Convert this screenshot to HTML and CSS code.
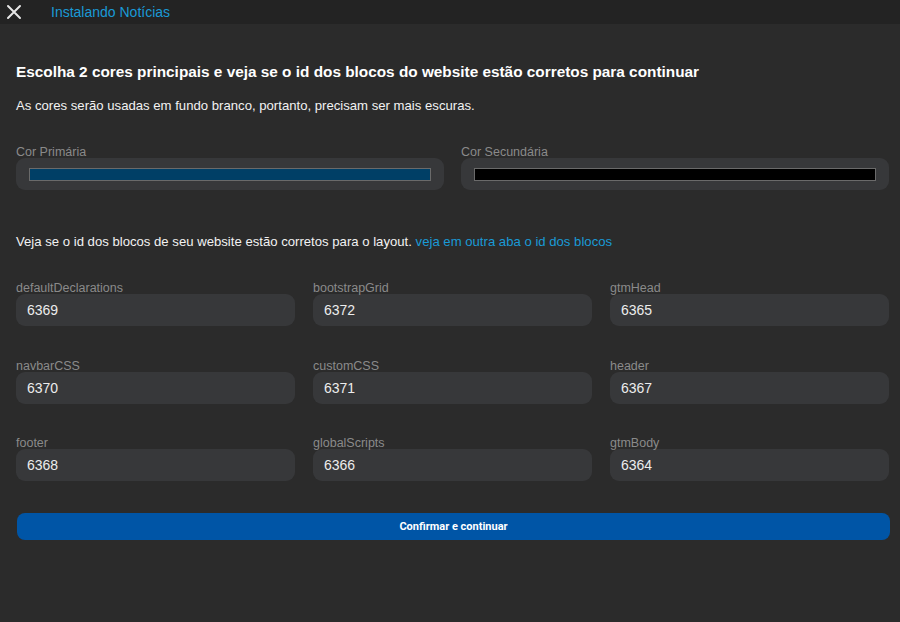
FILE: index.html
```html
<!DOCTYPE html>
<html lang="pt-BR">
  <head>
    <meta charset="UTF-8" />
    <title>Instalando Notícias</title>
    <link rel="stylesheet" href="styles.css">
  </head>
  <body>
    <div class="topbar">
      <button class="close" aria-label="Fechar">
        <svg width="16" height="16" viewBox="0 0 16 16">
          <path d="M2 2 L14 14 M14 2 L2 14" stroke="#e6e6e6" stroke-width="2" stroke-linecap="round" fill="none" />
        </svg>
      </button>
      <span class="title">Instalando Notícias</span>
    </div>

    <div class="content">
      <h2>Escolha 2 cores principais e veja se o id dos blocos do website estão corretos para continuar</h2>
      <p class="hint">As cores serão usadas em fundo branco, portanto, precisam ser mais escuras.</p>

      <div class="colors">
        <div class="field">
          <label>Cor Primária</label>
          <div class="color-box"><span class="swatch primary"></span></div>
        </div>
        <div class="field">
          <label>Cor Secundária</label>
          <div class="color-box"><span class="swatch secondary"></span></div>
        </div>
      </div>

      <p class="blocks-text">Veja se o id dos blocos de seu website estão corretos para o layout. <a href="#">veja em outra aba o id dos blocos</a></p>

      <div class="blocks">
        <div class="field"><label>defaultDeclarations</label><input type="text" value="6369"></div>
        <div class="field"><label>bootstrapGrid</label><input type="text" value="6372"></div>
        <div class="field"><label>gtmHead</label><input type="text" value="6365"></div>
        <div class="field"><label>navbarCSS</label><input type="text" value="6370"></div>
        <div class="field"><label>customCSS</label><input type="text" value="6371"></div>
        <div class="field"><label>header</label><input type="text" value="6367"></div>
        <div class="field"><label>footer</label><input type="text" value="6368"></div>
        <div class="field"><label>globalScripts</label><input type="text" value="6366"></div>
        <div class="field"><label>gtmBody</label><input type="text" value="6364"></div>
      </div>

      <button class="confirm">Confirmar e continuar</button>
    </div>
  </body>
</html>
```

FILE: styles.css
```css
body {
  font-family: "Liberation Sans", Arial, sans-serif;
  background: #2b2b2b;
  color: #f2f2f2;
  margin: 0;
  padding: 0;
  min-height: 100vh;
}

.topbar {
  height: 24px;
  background: #232323;
  display: flex;
  align-items: center;
}

.close {
  background: none;
  border: none;
  padding: 0;
  margin-left: 6px;
  width: 16px;
  height: 16px;
  display: flex;
  cursor: pointer;
}

.title {
  margin-left: 29px;
  font-size: 14px;
  color: #1a9ad6;
}

.content {
  padding: 0 11px 0 16px;
}

h2 {
  font-size: 15.35px;
  font-weight: bold;
  color: #fff;
  margin: 39px 0 0;
}

.hint {
  font-size: 13.15px;
  margin: 17px 0 0;
}

.colors {
  display: grid;
  grid-template-columns: 1fr 1fr;
  gap: 17px;
  margin-top: 33px;
}

label {
  display: block;
  font-size: 12.5px;
  color: #8a8a8a;
  line-height: 12px;
}

.color-box {
  height: 32px;
  background: #37383a;
  border-radius: 9px;
  padding: 0 13px;
  display: flex;
  align-items: center;
}

.swatch {
  flex: 1;
  height: 11px;
  border: 1px solid #6a6a6a;
}

.swatch.primary {
  background: #003f66;
}

.swatch.secondary {
  background: #000;
}

.blocks-text {
  font-size: 13.15px;
  margin: 44px 0 0;
}

.blocks-text a {
  color: #1a9ad6;
  text-decoration: none;
}

.blocks {
  display: grid;
  grid-template-columns: repeat(3, 1fr);
  column-gap: 18px;
  row-gap: 33.5px;
  margin-top: 33px;
}

input {
  display: block;
  box-sizing: border-box;
  width: 100%;
  height: 32px;
  border: none;
  border-radius: 9px;
  background: #37383a;
  color: #ececec;
  font-family: inherit;
  font-size: 14px;
  padding: 0 11px;
  outline: none;
}

.confirm {
  display: block;
  width: 100%;
  margin: 32px 0 0 1px;
  height: 27px;
  border: none;
  border-radius: 8px;
  background: #0055a6;
  color: #fff;
  font-family: Roboto, "Liberation Sans", sans-serif;
  font-size: 11px;
  font-weight: bold;
  cursor: pointer;
}
```
